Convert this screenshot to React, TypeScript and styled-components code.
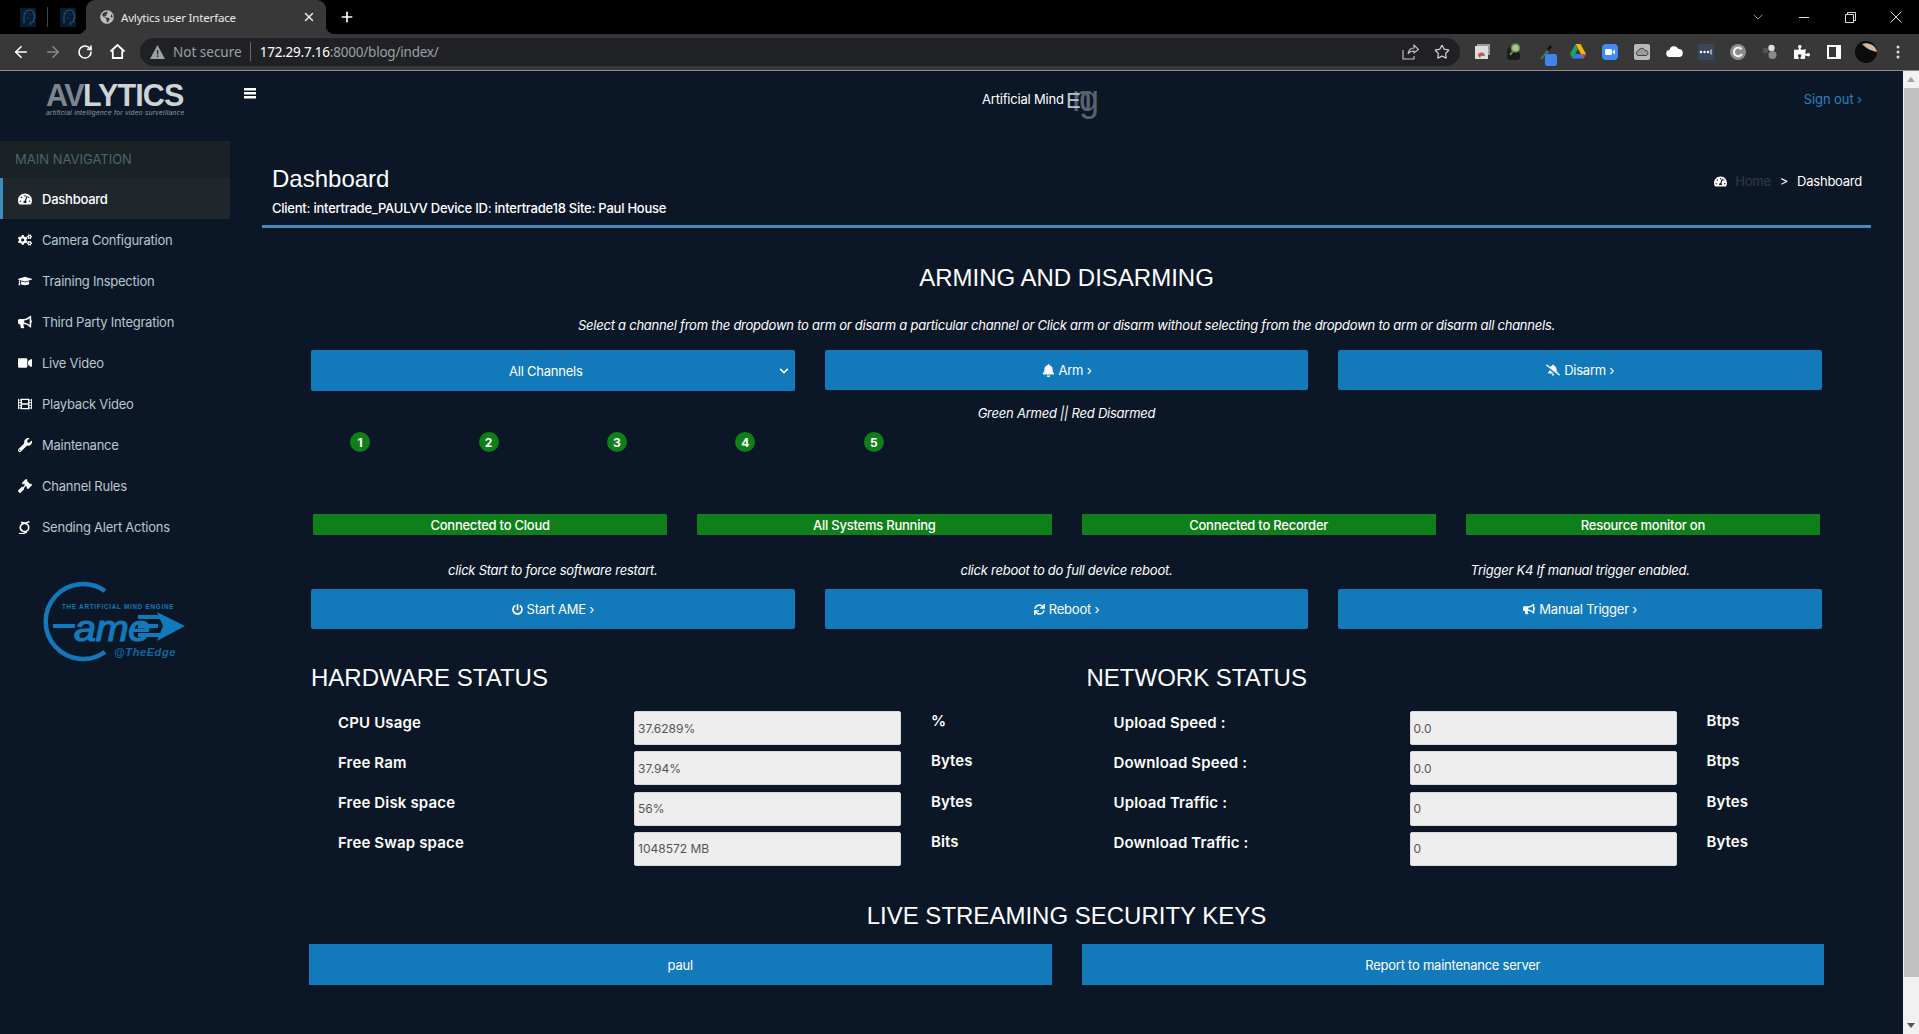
import React from "react";
import styled, { createGlobalStyle } from "styled-components";
import {
  FaTachometerAlt, FaCogs, FaGraduationCap, FaBullhorn, FaVideo, FaFilm, FaWrench, FaGavel,
  FaBell, FaBellSlash, FaPowerOff, FaSync, FaChevronDown, FaPuzzlePiece, FaGlobeAmericas,
} from "react-icons/fa";
import { ArrowLeft, ArrowRight, RotateCw, Star, X, Plus, ChevronDown } from "lucide-react";

const BODY = `"Inter", "Open Sans", sans-serif`;
const HEAD = `"Liberation Sans", Arial, sans-serif`;
const UI = `"Noto Sans", "Open Sans", sans-serif`;
const BLUE = "#1279bb";

const Global = createGlobalStyle`
  html, body { margin: 0; padding: 0; height: 100%; overflow: hidden; background: #0b1727; }
  * { box-sizing: border-box; }
  #root { height: 100%; }
`;

const Shell = styled.div`
  height: 1034px; display: flex; flex-direction: column; overflow: hidden;
  font-family: ${BODY}; color: #fff;
`;
const TabStrip = styled.div`
  height: 34px; background: #000; display: flex; align-items: flex-end; flex: none;
`;
const Pinned = styled.div`
  width: ${p => p.$w}px; height: 34px; display: flex; align-items: center; justify-content: center;
  padding-left: ${p => p.$pad ?? 0}px;
`;
const PinnedGap = styled.div`
  width: 1px; height: 20px; background: #444; margin-bottom: 7px;
`;
const Tab = styled.div`
  width: 240px; height: 34px; margin-left: -1px; background: #383838; border-radius: 9px 9px 0 0;
  display: flex; align-items: center; padding: 0 10px 0 14px; position: relative; flex: none;
  &::before, &::after {
    content: ""; position: absolute; bottom: 0; width: 8px; height: 8px; background: #000;
  }
  &::before { left: -8px; border-bottom-right-radius: 8px; box-shadow: 3px 3px 0 #383838; }
  &::after { right: -8px; border-bottom-left-radius: 8px; box-shadow: -3px 3px 0 #383838; }
`;
const TabTitle = styled.span`
  font: 11.5px ${UI}; letter-spacing: -.17px; color: #e8eaed; margin-left: 7px; flex: 1; white-space: nowrap;
`;
const NewTab = styled.div`
  margin-left: 13px; height: 34px; display: flex; align-items: center; color: #fff;
`;
const WindowControls = styled.div`
  margin-left: auto; height: 34px; display: flex; align-items: center;
`;
const WinBtn = styled.div`
  width: 46px; height: 34px; display: flex; align-items: center; justify-content: center; color: #ddd;
`;
const Toolbar = styled.div`
  height: 37px; background: #383838; border-bottom: 1px solid #8d8d8d; display: flex; align-items: center;
  flex: none; padding-bottom: 1px;
`;
const NavBtns = styled.div`
  display: flex; align-items: center; width: 140px; padding-left: 5px; flex: none;
`;
const NavBtn = styled.div`
  width: 32px; height: 28px; display: flex; align-items: center; justify-content: center;
  color: ${p => (p.$dim ? "#8a8a8a" : "#fff")};
`;
const Omni = styled.div`
  width: 1320px; height: 28px; background: #202124; border-radius: 14px; display: flex; align-items: center;
  padding: 0 0 0 10px; flex: none; font: 13.5px ${UI}; color: #9aa0a6;
`;
const NotSecure = styled.span`
  margin-left: 8px; white-space: nowrap;
`;
const OmniSep = styled.span`
  width: 1px; height: 19px; background: #6a6a6a; margin: 0 9px 0 8px;
`;
const UrlText = styled.span`letter-spacing: -.22px;`;
const Host = styled.span`color: #fff;`;
const OmniRight = styled.div`
  margin-left: auto; display: flex; align-items: center; gap: 15px; padding-right: 10px; color: #c8c8c8;
`;
const Extensions = styled.div`
  display: flex; align-items: center; padding-left: 6px;
`;
const Ext = styled.div`
  width: 32px; height: 28px; display: flex; align-items: center; justify-content: center; position: relative; flex: none;
`;
const ExtBadge = styled.span`
  position: absolute; right: 5px; bottom: 0; width: 12px; height: 12px; background: #3f83ee; border-radius: 2px;
`;
const Viewport = styled.div`
  flex: 1; display: flex; min-height: 0; background: #0b1727;
`;
const Sidebar = styled.aside`
  width: 230px; flex: none; display: flex; flex-direction: column; letter-spacing: -.24px;
`;
const Brand = styled.div`
  height: 70px; padding: 12px 0 0 46px; display: flex; flex-direction: column;
`;
const BrandWord = styled.div`
  font: 900 30.5px/24px ${HEAD}; letter-spacing: -0.9px; color: #cfd3d6; white-space: nowrap;
`;
const BrandAV = styled.span`color: #7d868c; letter-spacing: -1.5px;`;
const BrandTag = styled.div`
  font: italic 6.8px/9px ${HEAD}; color: #8f989e; letter-spacing: .3px; white-space: nowrap; margin-top: 1px;
`;
const NavHeader = styled.div`
  height: 37px; background: #1a2226; color: #4b646f; font-size: 13px; letter-spacing: 0; line-height: 37px; padding-left: 15px;
`;
const NavItem = styled.div`
  height: 41.1px; display: flex; align-items: center; padding-left: 15px; font-size: 13px;
  color: ${p => (p.$active ? "#fff" : "#b8c7ce")};
  background: ${p => (p.$active ? "#20272c" : "transparent")};
  border-left: 3px solid ${p => (p.$active ? "#3c8dbc" : "transparent")};
  font-weight: ${p => (p.$active ? 500 : 400)};
`;
const NavIcon = styled.span`
  width: 24px; display: flex; align-items: center; color: #fff; font-size: 14px; flex: none;
`;
const AmeLogo = styled.svg`
  display: block; margin: 21px 0 0 30px;
`;
const Main = styled.main`
  flex: 1; min-width: 0; display: flex; flex-direction: column; padding: 0 32px; letter-spacing: -.24px;
`;
const TopBar = styled.div`
  height: 95px; display: flex; align-items: flex-start; margin-left: -32px; margin-right: -32px; padding: 15px 41px 0 14px; position: relative;
`;
const Burger = styled.div`
  color: #fff; display: flex; margin-top: 2px;
`;
const MindTitle = styled.div`
  margin-left: 726px; font-size: 13px; line-height: 18px; margin-top: 4px; white-space: nowrap; position: relative; width: 84px;
  letter-spacing: -.2px;
`;
const MindE = styled.span`
  position: absolute; left: 84px; top: -1px; font: 22px/24px ${HEAD}; letter-spacing: 0; color: #bcc1c6;
`;
const MindNg = styled.span`
  position: absolute; left: 90px; top: -9px; font: 36px/36px ${HEAD}; color: #59636d; letter-spacing: -13px;
`;
const SignOut = styled.div`
  margin-left: auto; font-size: 13px; line-height: 18px; color: #2c82c0; margin-top: 4px; letter-spacing: -.1px;
`;
const Header = styled.header`
  display: flex; justify-content: space-between; padding: 0 9px 8px 10px; border-bottom: 3px solid #3c8dbc; height: 62px;
`;
const TitleCol = styled.div`display: flex; flex-direction: column;`;
const PageTitle = styled.h1`
  margin: 0; font: 400 24px/26px ${HEAD}; letter-spacing: 0; color: #fff;
`;
const ClientLine = styled.div`
  margin-top: 7px; font-size: 13px; line-height: 18px; font-weight: 500; white-space: nowrap;
`;
const Crumbs = styled.div`
  display: flex; align-items: center; gap: 9px; font-size: 13px; height: 18px; margin-top: 6px;
`;
const CrumbDim = styled.span`color: #333a41; margin-left: -1px;`;
const SectionHeading = styled.h2`
  margin: ${p => p.$top}px 0 0; font: 400 24px/28px ${HEAD}; letter-spacing: 0; color: #fff; text-align: center;
`;
const Note = styled.p`
  margin: ${p => p.$top}px 0 0; font-size: 13px; line-height: 18px; font-style: italic; text-align: center; white-space: nowrap;
`;
const Band = styled.div`padding: 0 49px;`;
const Three = styled.div`
  display: grid; grid-template-columns: repeat(3, 1fr); gap: 30px; align-items: start; margin-top: ${p => p.$top}px;
`;
const Btn = styled.div`
  height: 40px; background: ${BLUE}; border-radius: 2px; display: flex; align-items: center; justify-content: center;
  gap: 4px; font-size: 13px; color: #fff;
`;
const SelectBtn = styled(Btn)`
  height: 41px; padding-right: 14px; position: relative;
`;
const SelectChevron = styled.span`
  position: absolute; right: 6px; top: 50%; transform: translateY(-50%); display: flex;
`;
const Channels = styled.div`
  display: flex; margin: 10px 0 0 -15px;
`;
const ChannelCell = styled.div`
  width: 128.4px; display: flex; justify-content: center;
`;
const Dot = styled.div`
  width: 20px; height: 20px; border-radius: 50%; background: #0f7f1a; font-size: 12px; font-weight: 700; letter-spacing: 0;
  display: flex; align-items: center; justify-content: center;
`;
const Statuses = styled.div`
  display: grid; grid-template-columns: repeat(4, 1fr); gap: 30px; margin: 62px 2px 0;
`;
const Status = styled.div`
  height: 21px; background: #0f7f1a; border-radius: 1px; font-size: 13px; font-weight: 500;
  display: flex; align-items: center; justify-content: center;
`;
const Hints = styled.div`
  display: grid; grid-template-columns: repeat(3, 1fr); gap: 30px; margin-top: 26px;
`;
const Hint = styled.div`
  font-size: 13px; line-height: 18px; font-style: italic; text-align: center; white-space: nowrap;
`;
const StatusCols = styled.div`
  display: grid; grid-template-columns: 775.500px 1fr; margin-top: 35px;
`;
const StatusHeading = styled.h2`
  margin: 0 0 19px; font: 400 24px/28px ${HEAD}; letter-spacing: 0;
`;
const StatRow = styled.div`
  display: grid; grid-template-columns: 296px 267px auto; padding-left: 27px; height: 34px; margin-bottom: 6.33px;
`;
const StatLabel = styled.div`
  font-size: 15px; line-height: 20px; font-weight: 600; margin-top: 1.5px; white-space: nowrap; letter-spacing: .15px;
`;
const StatValue = styled.div`
  height: 34px; background: #eee; border: 1px solid #d9d9d9; border-radius: 2px; color: #555; font-size: 12px; letter-spacing: 0;
  padding-left: 3px; display: flex; align-items: center;
`;
const StatUnit = styled.div`
  margin-left: 30px; font-size: 15px; line-height: 20px; font-weight: 600; letter-spacing: .05px;
`;
const KeyRow = styled.div`
  display: grid; grid-template-columns: 1fr 1fr; gap: 30px; padding: 0 47px; margin-top: 14px;
`;
const KeyBtn = styled.div`
  height: 41px; background: ${BLUE}; display: flex; align-items: center; justify-content: center; font-size: 13px;
`;
const ScrollTrack = styled.div`
  width: 16px; flex: none; background: #f1f1f1; display: flex; flex-direction: column; align-items: center; padding-top: 6px;
`;
const ScrollArrow = styled.div`
  width: 0; height: 0; border-left: 4px solid transparent; border-right: 4px solid transparent;
  ${p => (p.$down ? "border-top: 5px solid #555;" : "border-bottom: 5px solid #a3a3a3;")}
`;
const ScrollThumb = styled.div`
  width: 15px; height: 889px; background: #c1c1c1; margin: 6px 0 46px;
`;

const HeadIcon = () => (
  <svg width="16" height="19" viewBox="0 0 16 19">
    <rect width="16" height="19" fill="#0a1c30" />
    <path d="M4 15V9c0-4 2.500-7 6-7 2.500 0 4 2 4 5l1 3-1.500 1v3l-3 .5V17" fill="none" stroke="#1d5580" strokeWidth="1.200" />
    <path d="M7 6c2-1 3 0 4 2M6 10c1.500-1 3-.5 4 1" fill="none" stroke="#143c5e" />
  </svg>
);
const navItems: [string, React.ReactNode][] = [
  ["Dashboard", <FaTachometerAlt />],
  ["Camera Configuration", <FaCogs />],
  ["Training Inspection", <FaGraduationCap />],
  ["Third Party Integration", <FaBullhorn />],
  ["Live Video", <FaVideo />],
  ["Playback Video", <FaFilm />],
  ["Maintenance", <FaWrench />],
  ["Channel Rules", <FaGavel />],
  ["Sending Alert Actions", (
    <svg width="13" height="13" viewBox="0 0 13 13" fill="none" stroke="#fff">
      <circle cx="6.500" cy="6.500" r="4.200" strokeWidth="1.700" />
      <path d="M3 1.200c2.500 1 5.500 1 8.500-.5M1 12.300c3 .7 6 .2 8-1.500" strokeWidth="1.300" />
    </svg>
  )],
];
const hardware = [["CPU Usage", "37.6289%", "%"], ["Free Ram", "37.94%", "Bytes"], ["Free Disk space", "56%", "Bytes"], ["Free Swap space", "1048572 MB", "Bits"]];
const network = [["Upload Speed :", "0.0", "Btps"], ["Download Speed :", "0.0", "Btps"], ["Upload Traffic :", "0", "Bytes"], ["Download Traffic :", "0", "Bytes"]];

const StatList = ({ rows }: { rows: string[][] }) => (
  <>
    {rows.map(([l, v, u]) => (
      <StatRow key={l}>
        <StatLabel>{l}</StatLabel>
        <StatValue>{v}</StatValue>
        <StatUnit>{u}</StatUnit>
      </StatRow>
    ))}
  </>
);

export default function App() {
  return (
    <Shell>
      <Global />
      <TabStrip>
        <Pinned $w={47} $pad={9}><HeadIcon /></Pinned>
        <PinnedGap />
        <Pinned $w={39}><HeadIcon /></Pinned>
        <Tab>
          <FaGlobeAmericas size={14} color="#bdbdbd" />
          <TabTitle>Avlytics user Interface</TabTitle>
          <X size={14} color="#e8e8e8" strokeWidth={2.500} />
        </Tab>
        <NewTab><Plus size={16} strokeWidth={2.500} /></NewTab>
        <WindowControls>
          <WinBtn><ChevronDown size={16} strokeWidth={1} /></WinBtn>
          <WinBtn><svg width="11" height="11"><path d="M0 5.500h10" stroke="#ddd" /></svg></WinBtn>
          <WinBtn><svg width="11" height="11" fill="none" stroke="#ddd"><path d="M.5 2.500h8v8h-8zM2.500 2.500v-2h8v8h-2" /></svg></WinBtn>
          <WinBtn><svg width="12" height="12" stroke="#ddd"><path d="M.5.500l11 11M11.500.500l-11 11" /></svg></WinBtn>
        </WindowControls>
      </TabStrip>
      <Toolbar>
        <NavBtns>
          <NavBtn><ArrowLeft size={18} strokeWidth={2.200} /></NavBtn>
          <NavBtn $dim><ArrowRight size={18} strokeWidth={2} /></NavBtn>
          <NavBtn><RotateCw size={16} strokeWidth={2.400} /></NavBtn>
          <NavBtn><svg width="17" height="17" viewBox="0 0 17 17" fill="none" stroke="#fff" strokeWidth="1.800"><path d="M1.500 8.500l7-6.500 7 6.500M3.800 7.500V15h9.400V7.500" /></svg></NavBtn>
        </NavBtns>
        <Omni>
          <svg width="15" height="14" viewBox="0 0 15 14"><path d="M7.500 0L15 14H0z" fill="#9aa0a6" /><path d="M7 5h1.200v4.500H7zM7 10.500h1.200V12H7z" fill="#202124" /></svg>
          <NotSecure>Not secure</NotSecure>
          <OmniSep />
          <UrlText><Host>172.29.7.16</Host>:8000/blog/index/</UrlText>
          <OmniRight>
            <svg width="17" height="17" viewBox="0 0 17 17" fill="none" stroke="#c8c8c8" strokeWidth="1.100"><path d="M1 7v9h11v-3M6 11c.5-4 3-6 6-6V2l4.500 4.500L12 10V8c-3 0-5 1-6 3z" /></svg>
            <Star size={16} strokeWidth={1.800} color="#d0d0d0" />
          </OmniRight>
        </Omni>
        <Extensions>
          <Ext><svg width="15" height="15" viewBox="0 0 15 15"><rect x="2" y="0" width="13" height="11" fill="#9a9a9a" /><rect y="2" width="13" height="13" fill="#ddd" /><path d="M3 12a3.500 3.500 0 0 1 7 0z" fill="#e8453c" /><path d="M6.500 12l3.500 0a3 3 0 0 0-1-2z" fill="#4a90e2" /><path d="M3 12h3l-1 2z" fill="#3aa757" /></svg></Ext>
          <Ext><svg width="16" height="18" viewBox="0 0 16 18"><rect x="1" y="9" width="13" height="8" rx="3" fill="#1a1a1a" /><circle cx="5" cy="8" r="4" fill="#1f1f1f" /><circle cx="9.500" cy="5" r="4" fill="#a9c49a" stroke="#6c8a45" strokeWidth="1.500" /><path d="M7 8l-3 4" stroke="#6c8a45" strokeWidth="2" /></svg></Ext>
          <Ext><svg width="14" height="16" viewBox="0 0 14 16"><path d="M1 15l7-9 2 2-7 7z" fill="#3e7a55" /><path d="M8 5l3-4 2 2-3 4z" fill="#111" /></svg><ExtBadge /></Ext>
          <Ext><svg width="16" height="15" viewBox="0 0 16 15"><path d="M5.500 0h5L16 10h-5z" fill="#f6b900" /><path d="M5.500 0L0 10l2.500 4.500L8 5z" fill="#1ea362" /><path d="M2.500 14.500h11L16 10H5z" fill="#3b78e7" /><path d="M11 10h5l-2.500 4.500z" fill="#e0452f" /></svg></Ext>
          <Ext><svg width="16" height="16" viewBox="0 0 16 16"><rect width="16" height="16" rx="4" fill="#3f8cf5" /><rect x="3" y="5" width="7" height="6" rx="1.500" fill="#fff" /><path d="M10.500 7.500L13 5.500v5l-2.500-2z" fill="#fff" /></svg></Ext>
          <Ext><svg width="16" height="16" viewBox="0 0 16 16"><rect width="16" height="16" rx="2" fill="#b9b9b9" /><path d="M4 11.500a2.300 2.300 0 0 1 .3-4.500 3.500 3.500 0 0 1 6.700-.5 2.500 2.500 0 0 1 1 5z" fill="#9a9a9a" stroke="#444" /></svg></Ext>
          <Ext><svg width="17" height="11" viewBox="0 0 17 11"><path d="M4 11a3.500 3.500 0 0 1-.5-7A4.800 4.800 0 0 1 12.500 3 4 4 0 0 1 13 11z" fill="#fff" /></svg></Ext>
          <Ext><svg width="16" height="16" viewBox="0 0 16 16"><rect width="16" height="16" rx="1" fill="#37485a" /><circle cx="3" cy="8" r="1.200" fill="#fff" /><circle cx="6.500" cy="8" r="1.200" fill="#fff" /><circle cx="10" cy="8" r="1.200" fill="#fff" /><path d="M13 5.500v5" stroke="#fff" /></svg></Ext>
          <Ext><svg width="16" height="16" viewBox="0 0 16 16"><circle cx="8" cy="8" r="8" fill="#8c8c8c" /><path d="M11.500 5.200A4.300 4.300 0 1 0 12 10" fill="none" stroke="#eee" strokeWidth="2.200" /></svg></Ext>
          <Ext><svg width="16" height="16" viewBox="0 0 16 16"><circle cx="3.500" cy="6.500" r="2.800" fill="#555" /><circle cx="9.500" cy="4" r="3.200" fill="#ddd" /><circle cx="10.500" cy="11" r="4" fill="#8a8a8a" /></svg></Ext>
          <Ext><FaPuzzlePiece size={16} color="#fff" /></Ext>
          <Ext><svg width="14" height="14" viewBox="0 0 14 14"><path d="M0 0h14v14H0zM2 2v10h7V2z" fill="#fff" fillRule="evenodd" /></svg></Ext>
          <Ext><svg width="22" height="22" viewBox="0 0 22 22"><circle cx="11" cy="11" r="11" fill="#0c0c0c" /><path d="M7 3a11 11 0 0 1 15 8c-4-1-9-2-15-8z" fill="#d9b99b" /></svg></Ext>
          <Ext><svg width="4" height="14" viewBox="0 0 4 14" fill="#ddd"><circle cx="2" cy="2" r="1.500" /><circle cx="2" cy="7" r="1.500" /><circle cx="2" cy="12" r="1.500" /></svg></Ext>
        </Extensions>
      </Toolbar>
      <Viewport>
        <Sidebar>
          <Brand>
            <BrandWord><BrandAV>AV</BrandAV>LYTICS</BrandWord>
            <BrandTag>artificial intelligence for video surveillance</BrandTag>
          </Brand>
          <NavHeader>MAIN NAVIGATION</NavHeader>
          {navItems.map(([label, icon], i) => (
            <NavItem key={label} $active={i === 0}>
              <NavIcon>{icon}</NavIcon>
              {label}
            </NavItem>
          ))}
          <AmeLogo width="170" height="100" viewBox="0 0 170 100">
            <path d="M75 22A37.500 37.500 0 1 0 75 83" fill="none" stroke={BLUE} strokeWidth="4.500" />
            <text x="32" y="39.500" fontFamily={HEAD} fontWeight="700" fontSize="6.300" letterSpacing=".75" fill={BLUE}>THE ARTIFICIAL MIND ENGINE</text>
            <path d="M23 57h22M108 48h24M108 57h20M108 66h24" stroke={BLUE} strokeWidth="4" />
            <text x="44" y="72" fontFamily={HEAD} fontStyle="italic" fontWeight="400" fontSize="36" textLength="76" lengthAdjust="spacingAndGlyphs" fill={BLUE} stroke={BLUE} strokeWidth="1.200">ame</text>
            <path d="M155 57l-28-14 6 14-6 15z" fill={BLUE} />
            <text x="84" y="87" fontFamily={HEAD} fontStyle="italic" fontWeight="700" fontSize="11" letterSpacing=".6" fill="#14669f">@TheEdge</text>
          </AmeLogo>
        </Sidebar>
        <Main>
          <TopBar>
            <Burger><svg width="12" height="11" viewBox="0 0 12 11" fill="#fff"><rect width="12" height="2.500" /><rect y="4" width="12" height="2.500" /><rect y="8" width="12" height="2.500" /></svg></Burger>
            <MindTitle>Artificial Mind<MindNg>ng</MindNg><MindE>E</MindE></MindTitle>
            <SignOut>Sign out ›</SignOut>
          </TopBar>
          <Header>
            <TitleCol>
              <PageTitle>Dashboard</PageTitle>
              <ClientLine>Client: intertrade_PAULVV Device ID: intertrade18 Site: Paul House</ClientLine>
            </TitleCol>
            <Crumbs>
              <FaTachometerAlt size={13} />
              <CrumbDim>Home</CrumbDim>
              <span>&gt;</span>
              <span>Dashboard</span>
            </Crumbs>
          </Header>
          <SectionHeading $top={36}>ARMING AND DISARMING</SectionHeading>
          <Note $top={24}>Select a channel from the dropdown to arm or disarm a particular channel or Click arm or disarm without selecting from the dropdown to arm or disarm all channels.</Note>
          <Band>
            <Three $top={16}>
              <SelectBtn>All Channels<SelectChevron><FaChevronDown size={10} /></SelectChevron></SelectBtn>
              <Btn><FaBell size={13} /> Arm ›</Btn>
              <Btn><FaBellSlash size={14} /> Disarm ›</Btn>
            </Three>
            <Note $top={13}>Green Armed || Red Disarmed</Note>
            <Channels>
              {[1, 2, 3, 4, 5].map(n => (
                <ChannelCell key={n}><Dot>{n}</Dot></ChannelCell>
              ))}
            </Channels>
            <Statuses>
              <Status>Connected to Cloud</Status>
              <Status>All Systems Running</Status>
              <Status>Connected to Recorder</Status>
              <Status>Resource monitor on</Status>
            </Statuses>
            <Hints>
              <Hint>click Start to force software restart.</Hint>
              <Hint>click reboot to do full device reboot.</Hint>
              <Hint>Trigger K4 If manual trigger enabled.</Hint>
            </Hints>
            <Three $top={10}>
              <Btn><FaPowerOff size={11} /> Start AME ›</Btn>
              <Btn><FaSync size={11} /> Reboot ›</Btn>
              <Btn><FaBullhorn size={12} /> Manual Trigger ›</Btn>
            </Three>
            <StatusCols>
              <div>
                <StatusHeading>HARDWARE STATUS</StatusHeading>
                <StatList rows={hardware} />
              </div>
              <div>
                <StatusHeading>NETWORK STATUS</StatusHeading>
                <StatList rows={network} />
              </div>
            </StatusCols>
          </Band>
          <SectionHeading $top={30}>LIVE STREAMING SECURITY KEYS</SectionHeading>
          <KeyRow>
            <KeyBtn>paul</KeyBtn>
            <KeyBtn>Report to maintenance server</KeyBtn>
          </KeyRow>
        </Main>
        <ScrollTrack>
          <ScrollArrow />
          <ScrollThumb />
          <ScrollArrow $down />
        </ScrollTrack>
      </Viewport>
    </Shell>
  );
}
